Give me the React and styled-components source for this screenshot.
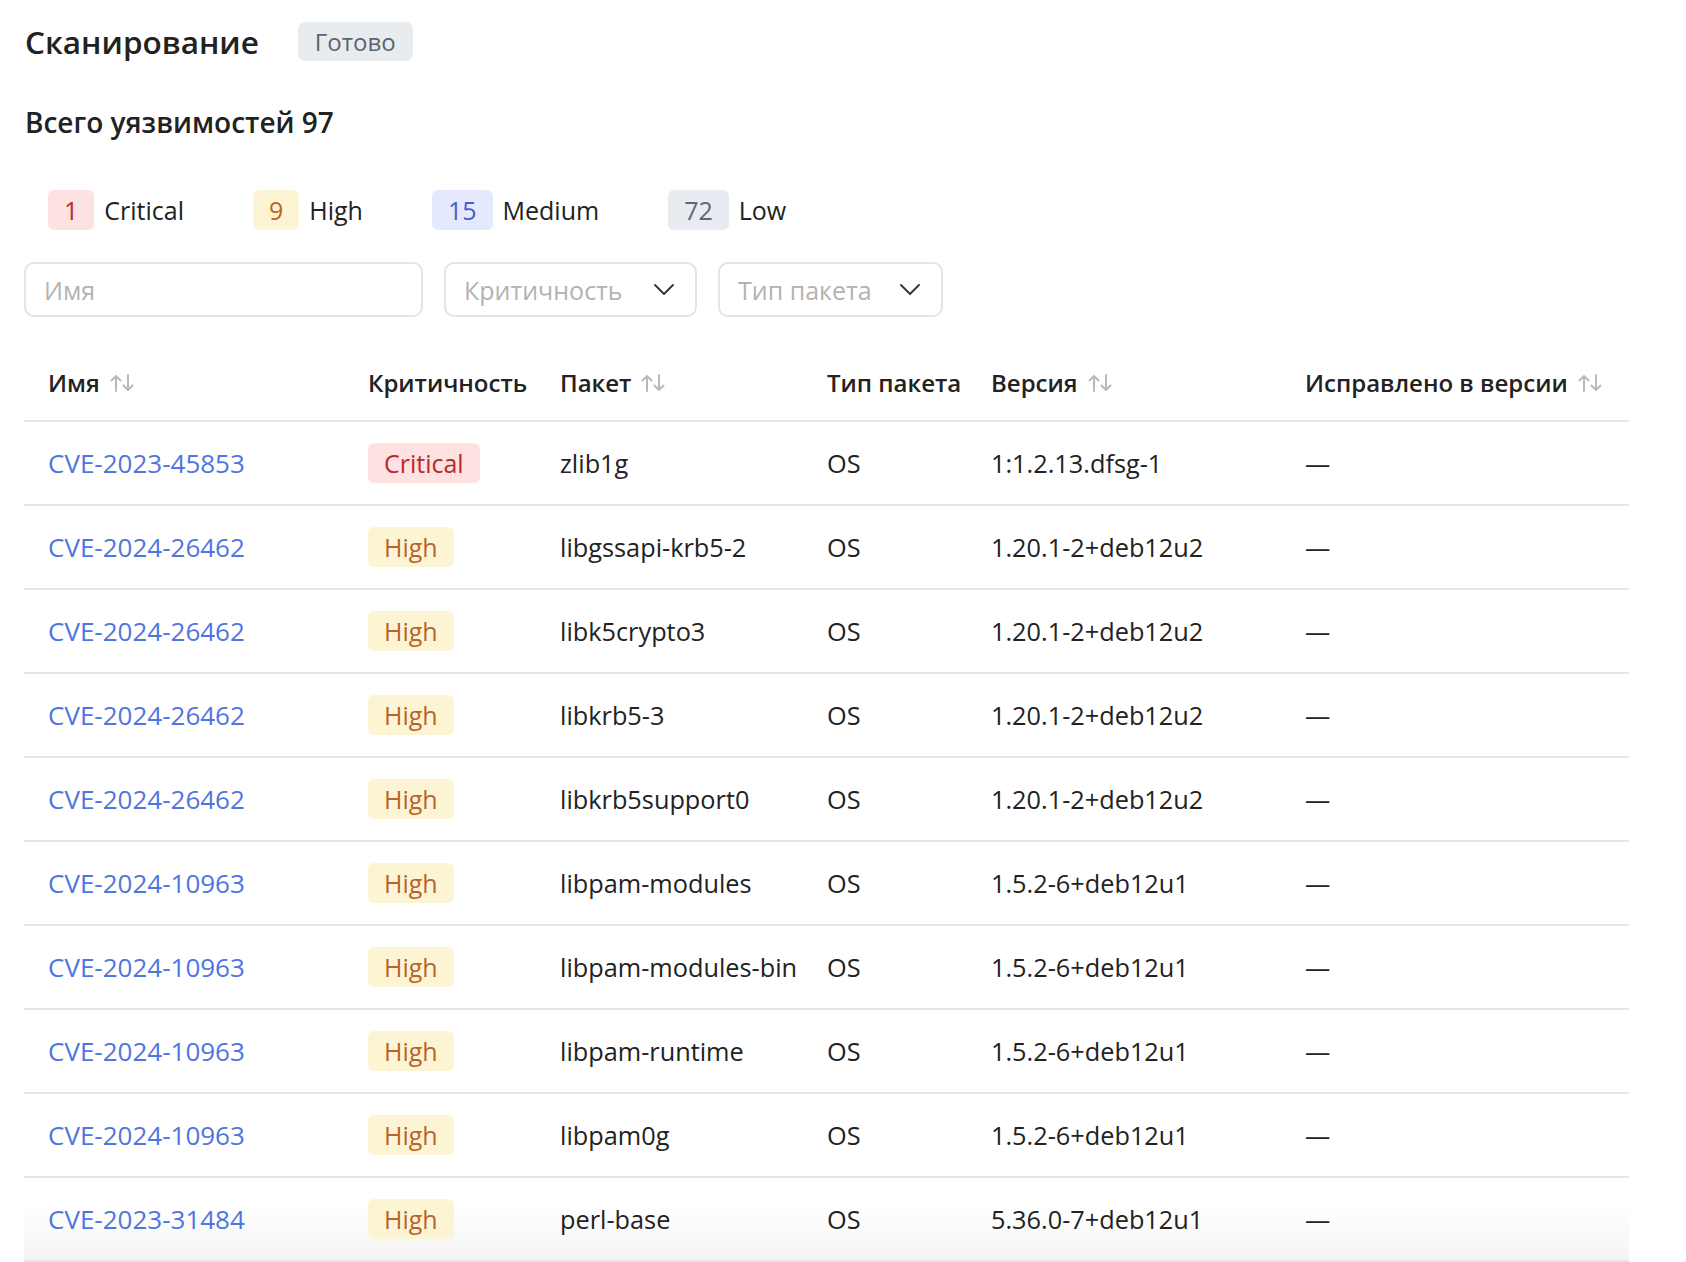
import React from 'react'
import styled, {createGlobalStyle} from 'styled-components'

const GlobalStyle = createGlobalStyle`
    html, body {
        margin: 0;
        padding: 0;
        background: #fff;
    }
    body {
        font-family: "Open Sans", "Noto Sans", sans-serif;
        color: #222;
    }
    * {
        box-sizing: border-box;
    }
`

const levels = {
    critical: {bg: '#fde2e1', color: '#b9292b'},
    high: {bg: '#fdf4d3', color: '#b8652a'},
    medium: {bg: '#e4e9fd', color: '#4a5fc4'},
    low: {bg: '#e8ebef', color: '#5c6678'},
}

const summary = [
    {count: 1, label: 'Critical', level: 'critical'},
    {count: 9, label: 'High', level: 'high'},
    {count: 15, label: 'Medium', level: 'medium'},
    {count: 72, label: 'Low', level: 'low'},
]

const columns = [
    {title: 'Имя', sort: true},
    {title: 'Критичность'},
    {title: 'Пакет', sort: true},
    {title: 'Тип пакета'},
    {title: 'Версия', sort: true},
    {title: 'Исправлено в версии', sort: true},
]

const rows = [
    ['CVE-2023-45853', 'critical', 'zlib1g', 'OS', '1:1.2.13.dfsg-1'],
    ['CVE-2024-26462', 'high', 'libgssapi-krb5-2', 'OS', '1.20.1-2+deb12u2'],
    ['CVE-2024-26462', 'high', 'libk5crypto3', 'OS', '1.20.1-2+deb12u2'],
    ['CVE-2024-26462', 'high', 'libkrb5-3', 'OS', '1.20.1-2+deb12u2'],
    ['CVE-2024-26462', 'high', 'libkrb5support0', 'OS', '1.20.1-2+deb12u2'],
    ['CVE-2024-10963', 'high', 'libpam-modules', 'OS', '1.5.2-6+deb12u1'],
    ['CVE-2024-10963', 'high', 'libpam-modules-bin', 'OS', '1.5.2-6+deb12u1'],
    ['CVE-2024-10963', 'high', 'libpam-runtime', 'OS', '1.5.2-6+deb12u1'],
    ['CVE-2024-10963', 'high', 'libpam0g', 'OS', '1.5.2-6+deb12u1'],
    ['CVE-2023-31484', 'high', 'perl-base', 'OS', '5.36.0-7+deb12u1'],
]

const levelName = {critical: 'Critical', high: 'High', medium: 'Medium', low: 'Low'}

const SortIcon = () => (
    <svg width="26" height="18" viewBox="0 0 26 18" fill="none" stroke="#b9b9b9" strokeWidth="2" strokeLinecap="round" strokeLinejoin="round">
        <path d="M7 17V2M2.5 6.5L7 2l4.5 4.5" />
        <path d="M19 1v15M14.5 11.5L19 16l4.5-4.5" />
    </svg>
)

const Chevron = () => (
    <svg width="20" height="11" viewBox="0 0 20 11" fill="none" stroke="#333" strokeWidth="1.8" strokeLinecap="round" strokeLinejoin="round">
        <path d="M1 1l9 9 9-9" />
    </svg>
)

const App = () => {
    return(
        <Page>
            <GlobalStyle/>
            <TitleRow>
                <Title>Сканирование</Title>
                <Status>Готово</Status>
            </TitleRow>
            <Subtitle>Всего уязвимостей 97</Subtitle>
            <Summary>
                {summary.map(item => (
                    <SummaryItem key={item.level}>
                        <Count level={item.level}>{item.count}</Count>
                        <span>{item.label}</span>
                    </SummaryItem>
                ))}
            </Summary>
            <Filters>
                <SearchInput placeholder="Имя"/>
                <Select width={253}>
                    <Placeholder>Критичность</Placeholder>
                    <Chevron/>
                </Select>
                <Select width={225}>
                    <Placeholder>Тип пакета</Placeholder>
                    <Chevron/>
                </Select>
            </Filters>
            <Table>
                <HeadRow>
                    {columns.map(col => (
                        <HeadCell key={col.title}>
                            {col.title}
                            {col.sort && <SortIcon/>}
                        </HeadCell>
                    ))}
                </HeadRow>
                {rows.map(([id, level, pkg, type, version], i) => (
                    <Row key={i} faded={i === rows.length - 1}>
                        <Cell><Link>{id}</Link></Cell>
                        <Cell><Level level={level}>{levelName[level]}</Level></Cell>
                        <Cell>{pkg}</Cell>
                        <Cell>{type}</Cell>
                        <Cell>{version}</Cell>
                        <Cell>—</Cell>
                    </Row>
                ))}
            </Table>
        </Page>
    )
}

export default App

const Page = styled.div`
    padding: 22px 24px 0 24px;
    width: 1686px;
    font-size: 25px;
`

const TitleRow = styled.div`
    display: flex;
    align-items: center;
    gap: 39px;
`

const Title = styled.h1`
    margin: 0;
    padding-left: 1px;
    font-size: 31.5px;
    font-weight: 600;
    line-height: 39px;
    color: #222;
`

const Status = styled.span`
    height: 39px;
    padding: 0 17px;
    display: flex;
    align-items: center;
    border-radius: 7px;
    background-color: #e9ecef;
    color: #5b6472;
    font-size: 24px;
`

const Subtitle = styled.h2`
    margin: 43px 0 0 0;
    padding-left: 1px;
    font-size: 28px;
    font-weight: 600;
    line-height: 36px;
    color: #222;
`

const Summary = styled.div`
    display: flex;
    gap: 69px;
    margin-top: 50px;
    padding-left: 24px;
`

const SummaryItem = styled.div`
    display: flex;
    align-items: center;
    gap: 10px;
    color: #222;
`

const Count = styled.span`
    height: 40px;
    padding: 0 16px;
    display: flex;
    align-items: center;
    border-radius: 6px;
    background-color: ${props => levels[props.level].bg};
    color: ${props => levels[props.level].color};
`

const Filters = styled.div`
    display: flex;
    gap: 21px;
    margin-top: 32px;
`

const SearchInput = styled.input`
    width: 399px;
    height: 55px;
    padding: 0 18px;
    border: 2px solid #e4e4e4;
    border-radius: 10px;
    font-family: inherit;
    font-size: 25px;
    color: #222;
    outline: none;

    &::placeholder {
        color: #b3b3b3;
    }
`

const Select = styled.div`
    width: ${props => props.width}px;
    height: 55px;
    padding: 0 21px 0 18px;
    display: flex;
    align-items: center;
    justify-content: space-between;
    border: 2px solid #e4e4e4;
    border-radius: 10px;
    cursor: pointer;
`

const Placeholder = styled.span`
    color: #b3b3b3;
`

const Table = styled.div`
    width: 1605px;
    margin-top: 30px;
`

const HeadRow = styled.div`
    display: grid;
    grid-template-columns: 320px 192px 267px 164px 314px 348px;
    height: 75px;
    border-bottom: 2px solid #e5e5e5;
`

const HeadCell = styled.div`
    display: flex;
    align-items: center;
    gap: 9px;
    padding-left: 24px;
    padding-bottom: 3px;
    font-size: 24px;
    font-weight: 600;
    color: #222;
    white-space: nowrap;

    svg {
        margin-top: 1px;
    }
`

const Row = styled.div`
    display: grid;
    grid-template-columns: 320px 192px 267px 164px 314px 348px;
    height: 84px;
    border-bottom: 2px solid #e5e5e5;
    background: ${props => props.faded ? 'linear-gradient(to bottom, #ffffff 35%, #f4f4f4 100%)' : '#fff'};
`

const Cell = styled.div`
    display: flex;
    align-items: center;
    padding-left: 24px;
    font-size: 25.3px;
    color: #222;
    white-space: nowrap;
`

const Link = styled.a`
    color: #4e75e2;
    font-size: 26px;
    text-decoration: none;
    cursor: pointer;
`

const Level = styled.span`
    height: 40px;
    padding: 0 16px;
    display: flex;
    align-items: center;
    border-radius: 6px;
    font-size: 25px;
    background-color: ${props => levels[props.level].bg};
    color: ${props => levels[props.level].color};
`
